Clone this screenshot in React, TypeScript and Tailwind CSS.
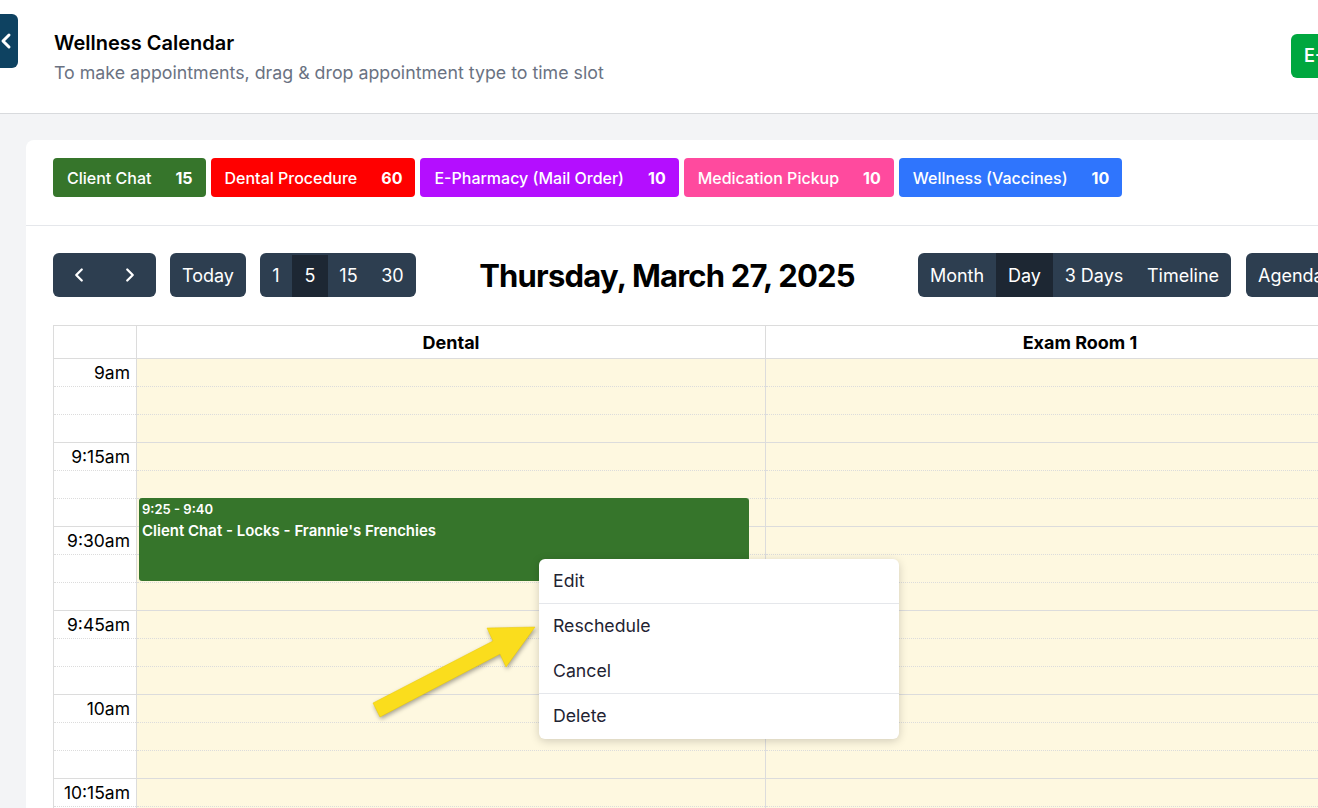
import { ChevronLeft, ChevronRight } from 'lucide-react';

const types = [
  { name: 'Client Chat', count: 15, color: 'bg-[#36752b]' },
  { name: 'Dental Procedure', count: 60, color: 'bg-[#ff0000]' },
  { name: 'E-Pharmacy (Mail Order)', count: 10, color: 'bg-[#b40eff]' },
  { name: 'Medication Pickup', count: 10, color: 'bg-[#ff4a9e]' },
  { name: 'Wellness (Vaccines)', count: 10, color: 'bg-[#2f75fd]' },
];

const resources = ['Dental', 'Exam Room 1', 'Exam Room 2'];

const slots = Array.from({ length: 20 }, (_, i) => {
  const mins = i * 5;
  const h = 9 + Math.floor(mins / 60);
  const m = mins % 60;
  const label = m === 0 ? `${h}am` : `${h}:${m}am`;
  return { label: i % 3 === 0 ? label : '', solid: (i + 1) % 3 === 0 };
});

function Slot({ solid, children, tint }: { solid: boolean; children?: React.ReactNode; tint?: boolean }) {
  return (
    <div
      className={
        'h-[28px] border-b border-[#dcdcdc] ' +
        (solid ? 'border-solid ' : 'border-dotted ') +
        (tint ? 'bg-[#fef8e0]' : 'bg-white')
      }
    >
      {children}
    </div>
  );
}

export default function App() {
  return (
    <div className="relative w-[1318px] h-[808px] overflow-hidden bg-gray-100 font-['Inter',sans-serif] text-black">
      {/* header */}
      <header className="w-[1420px] h-[114px] bg-white border-b border-[#d8dadd] flex items-start">
        <div className="mt-[14px] w-[18px] h-[54px] bg-[#0e4261] rounded-r-md flex items-center justify-start overflow-hidden">
          <ChevronLeft className="text-white -ml-[6px] shrink-0" size={24} strokeWidth={3} />
        </div>
        <div className="ml-[36px] mt-[29px]">
          <h1 className="text-[20px] font-semibold leading-[28px]">Wellness Calendar</h1>
          <p className="mt-[3px] text-[17.8px] leading-[26px] text-gray-500">
            To make appointments, drag &amp; drop appointment type to time slot
          </p>
        </div>
        <button className="ml-auto mr-[9px] mt-[34px] w-[120px] h-[44px] rounded-md bg-[#00a73f] text-white text-lg font-semibold text-left px-[13px] whitespace-nowrap">
          E-Pharmacy
        </button>
      </header>

      {/* calendar card */}
      <section className="ml-[26px] mt-[26px] w-[1420px] bg-white rounded-lg">
        <div className="flex gap-[5px] px-[27px] pt-[18px] pb-[28px] border-b border-gray-200">
          {types.map((t) => (
            <div
              key={t.name}
              className={`${t.color} h-[39px] rounded-[4px] pl-[14px] pr-[13px] flex items-center gap-[24px] text-white text-base`}
            >
              <span className="font-medium">{t.name}</span>
              <span className="font-bold">{t.count}</span>
            </div>
          ))}
        </div>

        {/* toolbar */}
        <div className="flex items-center h-[44px] mt-[27px] px-[27px] text-white text-lg">
          <div className="flex h-[44px] w-[103px] rounded-md bg-[#2d3e50]">
            <span className="flex-1 flex items-center justify-center">
              <ChevronLeft size={22} strokeWidth={2.5} />
            </span>
            <span className="flex-1 flex items-center justify-center">
              <ChevronRight size={22} strokeWidth={2.5} />
            </span>
          </div>
          <button className="ml-[14px] h-[44px] w-[76px] rounded-md bg-[#2d3e50] pt-[2px]">Today</button>
          <div className="ml-[14px] flex h-[44px] rounded-md bg-[#2d3e50] overflow-hidden pt-[2px]">
            <span className="w-[32px] flex items-center justify-center">1</span>
            <span className="w-[36px] flex items-center justify-center bg-[#1d2733]">5</span>
            <span className="w-[41px] flex items-center justify-center">15</span>
            <span className="w-[47px] flex items-center justify-center">30</span>
          </div>
          <h2 className="w-[502px] text-center text-black text-[31px] leading-[44px] font-bold tracking-tight pt-[2px]">
            Thursday, March 27, 2025
          </h2>
          <div className="flex h-[44px] rounded-md bg-[#2d3e50] overflow-hidden">
            <span className="w-[78px] flex items-center justify-center pt-[2px]">Month</span>
            <span className="w-[57px] flex items-center justify-center bg-[#1d2733] pt-[2px]">Day</span>
            <span className="w-[82px] flex items-center justify-center pt-[2px]">3 Days</span>
            <span className="w-[96px] flex items-center justify-center pt-[2px]">Timeline</span>
          </div>
          <button className="ml-[15px] h-[44px] w-[90px] rounded-md bg-[#2d3e50] text-left px-[12px] pt-[2px]">Agenda</button>
        </div>

        {/* grid */}
        <div className="ml-[27px] mt-[28px] flex border-t border-l border-[#dcdcdc]">
          <div className="w-[83px] shrink-0 border-r border-[#dcdcdc]">
            <div className="h-[33px] border-b border-[#dcdcdc]" />
            {slots.map((s, i) => (
              <Slot key={i} solid={s.solid}>
                <div className="h-full flex items-center justify-end pr-[6px] pt-[2px] text-[17.5px]">{s.label}</div>
              </Slot>
            ))}
          </div>
          {resources.map((r, ri) => (
            <div key={r} className="relative w-[629px] shrink-0 border-r border-[#dcdcdc]">
              <div className="h-[33px] border-b border-[#dcdcdc] flex items-center justify-center text-[18px] font-bold">
                {r}
              </div>
              {slots.map((s, i) => (
                <Slot key={i} solid={s.solid} tint />
              ))}
              {ri === 0 && (
                <div className="absolute left-[2px] top-[172px] w-[610px] h-[83px] rounded-[3px] bg-[#36752b] text-white px-[3px] pt-[2px]">
                  <div className="text-[13px] font-semibold leading-[18px]">9:25 - 9:40</div>
                  <div className="mt-[3px] text-[15px] font-semibold leading-5">
                    Client Chat - Locks - Frannie's Frenchies
                  </div>
                </div>
              )}
            </div>
          ))}
        </div>
      </section>

      {/* context menu */}
      <div className="absolute left-[539px] top-[559px] w-[360px] bg-white rounded-md shadow-[0_2px_10px_rgba(0,0,0,0.18)] text-[17.7px] text-[#1f2433]">
        <div className="h-[45px] flex items-center px-[14px] border-b border-gray-200">Edit</div>
        <div className="h-[45px] flex items-center px-[14px]">Reschedule</div>
        <div className="h-[45px] flex items-center px-[14px] border-b border-gray-200">Cancel</div>
        <div className="h-[45px] flex items-center px-[14px]">Delete</div>
      </div>

      {/* annotation arrow */}
      <svg
        className="absolute left-0 top-0 drop-shadow-[1px_2px_2px_rgba(0,0,0,0.35)]"
        width="1318"
        height="808"
        viewBox="0 0 1318 808"
      >
        <polygon
          points="373,703 493,641 487,628 535,627 506,667 500,654 380,717"
          fill="#fadd1d"
          stroke="#e8c800"
          strokeWidth="0.5"
        />
      </svg>
    </div>
  );
}
